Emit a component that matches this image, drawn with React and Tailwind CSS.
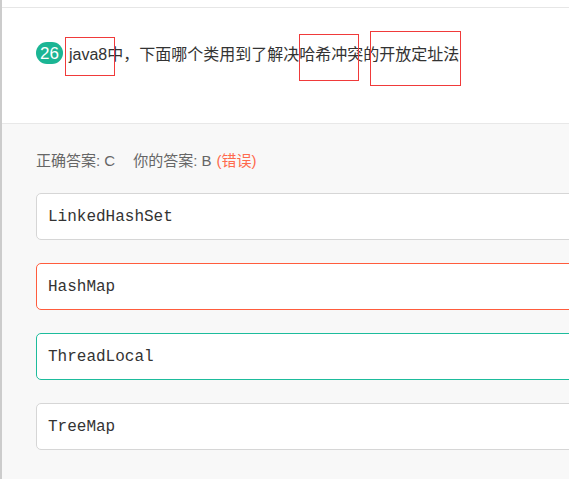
const options = [
  { key: "A", text: "LinkedHashSet", state: "normal" },
  { key: "B", text: "HashMap", state: "wrong" },
  { key: "C", text: "ThreadLocal", state: "right" },
  { key: "D", text: "TreeMap", state: "normal" },
];

const borderByState = {
  normal: "border-[#d6d6d6]",
  wrong: "border-[#ff5c3d]",
  right: "border-[#1dbc9c]",
};

function App() {
  return (
    <div className="w-[569px] h-[479px] overflow-hidden border-l-2 border-[#cccccc] bg-[#f8f8f8] font-['Liberation_Sans','Noto_Sans_CJK_SC',sans-serif]">
      <div className="h-2 bg-white border-b border-[#e6e6e6]" />

      {/* Question */}
      <div className="relative h-[116px] bg-white border-b border-[#e8e8e8] pl-[34px] pt-[34px]">
        <div className="flex items-center h-[22px] text-[16px] text-[#333]">
          <span className="flex items-center justify-center w-[27px] h-[22px] rounded-full bg-[#1bb594] text-white text-[17px] leading-none">
            26
          </span>
          <span className="ml-[6px] pt-[3px] leading-none">java8中，下面哪个类用到了解决哈希冲突的开放定址法</span>
        </div>

        {/* annotation boxes */}
        <div className="absolute left-[63px] top-[29px] w-[50px] h-[39px] border border-[#f03a3a]" />
        <div className="absolute left-[297px] top-[26px] w-[60px] h-[47px] border border-[#f03a3a]" />
        <div className="absolute left-[368px] top-[23px] w-[91px] h-[55px] border border-[#f03a3a]" />
      </div>

      {/* Answer */}
      <div className="pl-[34px] pt-[26px]">
        <div className="flex items-center h-[20px] text-[15px] text-[#666] leading-none">
          <span>正确答案: C</span>
          <span className="ml-[18px]">你的答案: B</span>
          <span className="ml-[5px] text-[#ff6a4d]">(错误)</span>
        </div>

        <div className="mt-[23px] flex flex-col gap-[23px] w-[600px]">
          {options.map((o) => (
            <div
              key={o.key}
              className={`h-[47px] flex items-center px-[11px] bg-white rounded-[5px] border ${borderByState[o.state]}`}
            >
              <span className="font-['Liberation_Mono',monospace] text-[16px] text-[#333]">{o.text}</span>
            </div>
          ))}
        </div>
      </div>
    </div>
  );
}

export default App;
